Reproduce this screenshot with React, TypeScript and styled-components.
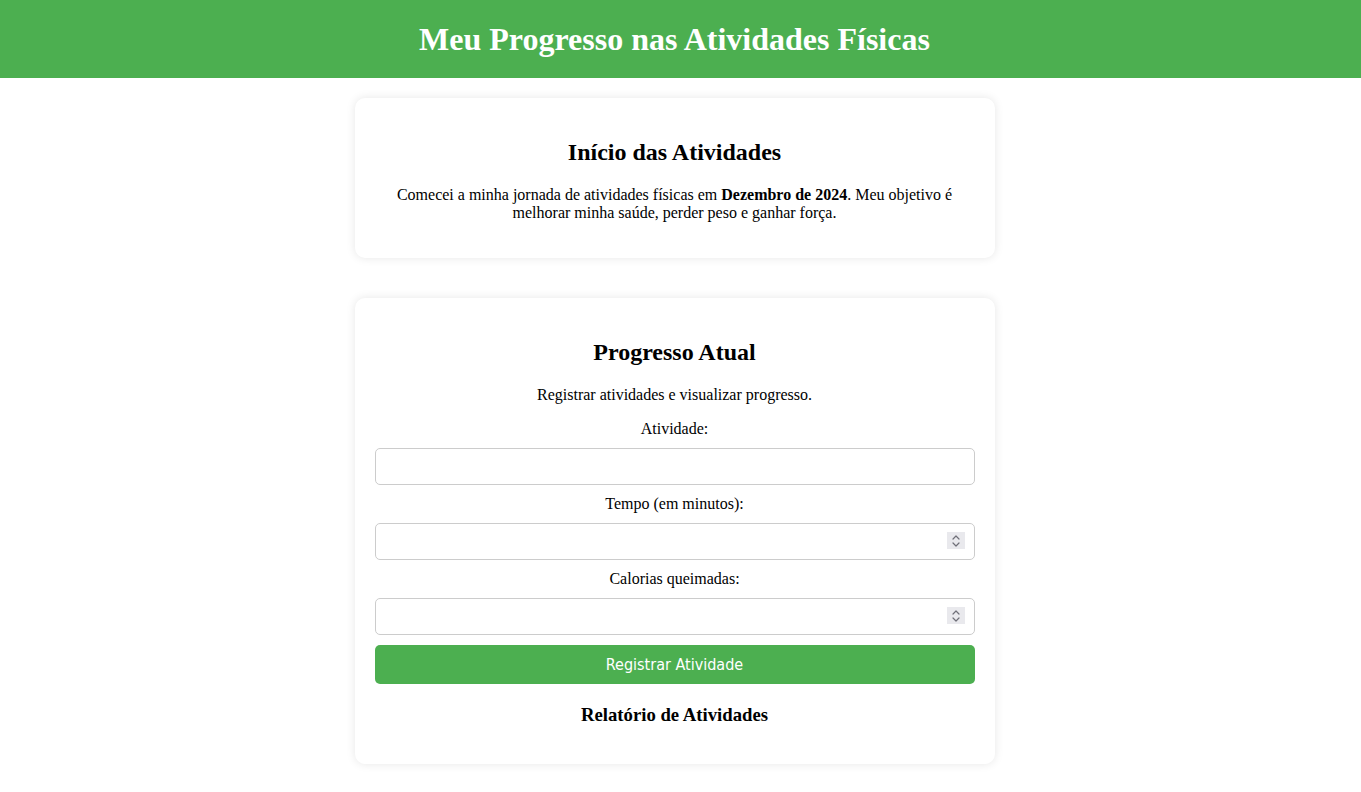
import React from "react";
import styled, { createGlobalStyle } from "styled-components";

const Global = createGlobalStyle`
  html, body { margin: 0; padding: 0; background: #ffffff; }
  body { font-family: "Liberation Serif", "Times New Roman", serif; font-size: 16px; color: #000; }
`;

const Header = styled.header`
  background: #4caf50;
  color: #ffffff;
  text-align: center;
  padding: 21px 12px 20px 0;
`;

const Title = styled.h1`
  margin: 0;
  font-size: 32px;
  font-weight: bold;
  line-height: 37px;
`;

const Main = styled.main`
  display: flex;
  flex-direction: column;
  align-items: center;
  gap: 40px;
  padding: 20px 12px 20px 0;
`;

const Card = styled.section`
  width: 600px;
  padding: 20px;
  background: #ffffff;
  border-radius: 10px;
  box-shadow: 0 0 10px rgba(0, 0, 0, 0.1);
  text-align: center;
`;

const CardTitle = styled.h2`
  font-size: 24px;
  margin: 20px 0;
  line-height: 28px;
`;

const Text = styled.p`
  margin: 16px 0;
  line-height: 18px;
`;

const Form = styled.form`
  display: flex;
  flex-direction: column;
  gap: 10px;
`;

const Label = styled.label`
  display: block;
  line-height: 18px;
`;

const Field = styled.div`
  position: relative;
`;

const Input = styled.input`
  box-sizing: border-box;
  display: block;
  width: 100%;
  height: 37px;
  padding: 10px;
  border: 1px solid #cccccc;
  border-radius: 5px;
  font-size: 14px;
  background: #fff;
  margin: 0;
  -moz-appearance: textfield;
  &::-webkit-inner-spin-button,
  &::-webkit-outer-spin-button {
    -webkit-appearance: none;
    margin: 0;
  }
`;

const Spin = styled.span`
  position: absolute;
  right: 10px;
  top: 9px;
  width: 18px;
  height: 17px;
  background: #e9e9ed;
  display: flex;
  align-items: center;
  justify-content: center;
  pointer-events: none;
`;

const Button = styled.button`
  height: 39px;
  padding: 10px;
  border: none;
  border-radius: 5px;
  background: #4caf50;
  color: #ffffff;
  font-family: "DejaVu Sans Condensed", "DejaVu Sans", sans-serif;
  font-size: 16px;
  cursor: pointer;
`;

const SubTitle = styled.h3`
  font-size: 18.72px;
  margin: 20px 0 17.5px;
  line-height: 22.5px;
`;

function SpinIcon() {
  return (
    <svg width="10" height="14" viewBox="0 0 10 14" fill="none" stroke="#6f6f78" strokeWidth="1.2" strokeLinecap="round" strokeLinejoin="round">
      <path d="M2 5 L5 2 L8 5" />
      <path d="M2 9 L5 12 L8 9" />
    </svg>
  );
}

function NumberField({ id }: { id: string }) {
  return (
    <Field>
      <Input id={id} type="number" />
      <Spin>
        <SpinIcon />
      </Spin>
    </Field>
  );
}

export default function App() {
  return (
    <>
      <Global />
      <Header>
        <Title>Meu Progresso nas Atividades Físicas</Title>
      </Header>
      <Main>
        <Card>
          <CardTitle>Início das Atividades</CardTitle>
          <Text>
            Comecei a minha jornada de atividades físicas em <strong>Dezembro de 2024</strong>. Meu objetivo é
            melhorar minha saúde, perder peso e ganhar força.
          </Text>
        </Card>
        <Card>
          <CardTitle>Progresso Atual</CardTitle>
          <Text>Registrar atividades e visualizar progresso.</Text>
          <Form onSubmit={(e) => e.preventDefault()}>
            <Label htmlFor="atividade">Atividade:</Label>
            <Input id="atividade" type="text" />
            <Label htmlFor="tempo">Tempo (em minutos):</Label>
            <NumberField id="tempo" />
            <Label htmlFor="calorias">Calorias queimadas:</Label>
            <NumberField id="calorias" />
            <Button type="submit">Registrar Atividade</Button>
          </Form>
          <SubTitle>Relatório de Atividades</SubTitle>
        </Card>
      </Main>
    </>
  );
}
